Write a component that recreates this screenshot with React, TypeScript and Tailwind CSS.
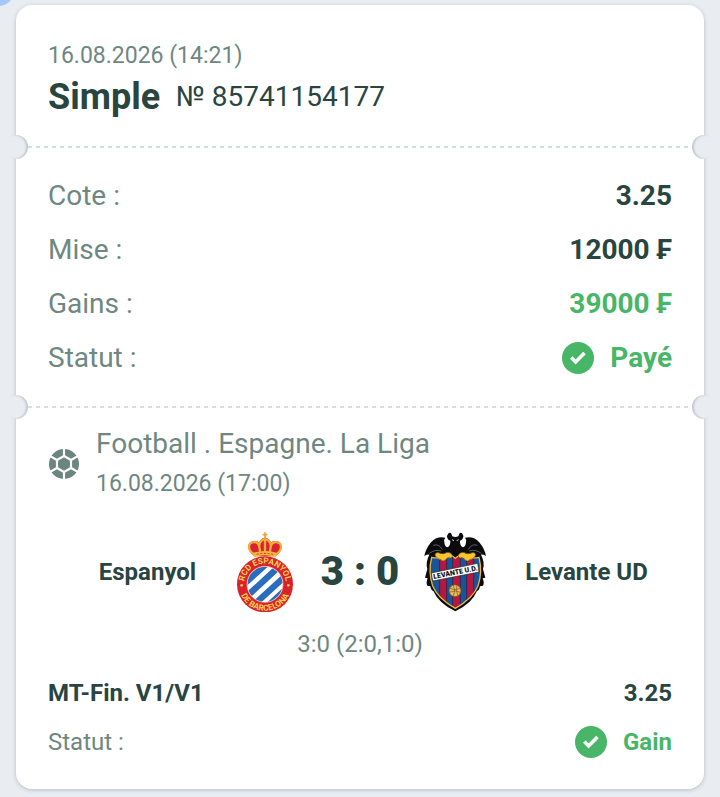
import React from 'react';
import clsx from 'clsx';

type Row = { label: string; value: string; win?: boolean };

const rows: Row[] = [
  { label: 'Cote :', value: '3.25' },
  { label: 'Mise :', value: '12000 ₣' },
  { label: 'Gains :', value: '39000 ₣', win: true },
];

const CheckBadge = () => (
  <svg viewBox="0 0 32 32" className="h-8 w-8 shrink-0" aria-hidden="true">
    <circle cx="16" cy="16" r="16" fill="#48b667" />
    <path d="M9.300 15.600l4.300 4.300 8.900-8.900" fill="none" stroke="#fff" strokeWidth="3.6" />
  </svg>
);

const BallIcon = () => (
  <svg viewBox="0 0 30 30" className="h-[30px] w-[30px] shrink-0" aria-hidden="true">
    <circle cx="15" cy="15" r="15" fill="#6b867f" />
    <g fill="none" stroke="#fff" strokeWidth="2.2">
      <path d="M15 7l7 4v8l-7 4-7-4v-8z" />
      <path d="M15-1v8M15 23v8M22 11l8-4.500M22 19l8 4.500M8 11L0 6.500M8 19l-8 4.500" />
    </g>
  </svg>
);

const EspanyolCrest = () => (
  <svg viewBox="27 30 192 240" className="h-20 w-16 shrink-0" role="img" aria-label="Espanyol">
    <defs>
      <clipPath id="esp-disc">
        <circle cx="123" cy="187" r="53" />
      </clipPath>
      <path id="esp-top" d="M61 199A63 63 0 1 1 185 199" />
      <path id="esp-bottom" d="M44 187a79 79 0 0 0 158 0" />
    </defs>
    <path d="M91 103C64 84 70 54 94 57q8 0 12 6 1-14 17-16 16 2 17 16 4-6 12-6c24-3 30 27 3 46z" fill="#d9232e" />
    <g fill="none" stroke="#f3ab3c" strokeWidth="7" strokeLinecap="round">
      <path d="M91 98C65 80 74 56 96 61q8 2 10 14l3 18" />
      <path d="M155 98c26-18 17-42-5-37q-8 2-10 14l-3 18" />
      <path d="M106 69q3-16 17-18 14 2 17 18M123 54v40" />
    </g>
    <path d="M123 31v20M116 38h14" stroke="#e8a52f" strokeWidth="5" />
    <path d="M86 93q37-12 74 0l-4 12q-33-10-66 0z" fill="#f3b83c" />
    <path d="M98 97q25-6 50 0" fill="none" stroke="#d9232e" strokeWidth="3" strokeDasharray="6 5" />
    <circle cx="123" cy="187" r="84" fill="#d9222c" />
    <circle cx="123" cy="187" r="54" fill="#fff" />
    <g clipPath="url(#esp-disc)" stroke="#2a6cbd" strokeWidth="19">
      <path d="M40 204L142 112M50 240L178 122M66 270L206 142M106 276L212 178" />
    </g>
    <circle cx="123" cy="187" r="54" fill="none" stroke="#f3c0a0" strokeWidth="2" />
    <g fill="#fbd052" className="font-['Roboto',sans-serif] text-[25px] font-bold">
      <text textAnchor="middle">
        <textPath href="#esp-top" startOffset="50%">RCD ESPANYOL</textPath>
      </text>
      <text textAnchor="middle">
        <textPath href="#esp-bottom" startOffset="50%">DE BARCELONA</textPath>
      </text>
    </g>
    <circle cx="53" cy="190" r="4" fill="#fbd052" />
    <circle cx="193" cy="190" r="4" fill="#fbd052" />
  </svg>
);

const SHIELD =
  'M53 106Q80 112 96 98Q112 97 124 109Q136 97 152 98Q168 112 195 106Q206 150 192 192Q176 230 124 259Q72 230 56 192Q42 150 53 106z';

const LevanteCrest = () => (
  <svg viewBox="27 30 192 240" className="h-20 w-16 shrink-0" role="img" aria-label="Levante UD">
    <defs>
      <clipPath id="lev-shield">
        <path d={SHIELD} />
      </clipPath>
    </defs>
    <path
      d="M104 33q6-2 8 2l3 8q9 4 18 0l3-8q2-4 8-2 6 8 3 15-2 7-9 8-1 15 9 20 8-2 9-15 2-9-3-14 26-6 44 15 15 18 19 40-8-5-15-4 12 22 6 43l7 26-8 2q6 14 1 22l-9 2q-2 12-9 14Q174 244 124 268Q74 244 58 207q-7-2-9-14l-9-2q-5-8 1-22l-8-2 7-26q-6-21 6-43-7-1-15 4 4-22 19-40 18-21 44-15-5 5-3 14 1 13 9 15 10-5 9-20-7-1-9-8-3-7 4-15z"
      fill="#0b0b0d"
    />
    <path d="M58 70q16-6 27 12M190 70q-16-6-27 12M46 94q18-13 36-7M202 94q-18-13-36-7" fill="none" stroke="#85898d" strokeWidth="2" />
    <path d="M114 53l6 3M134 53l-6 3" stroke="#c9cccf" strokeWidth="3" />
    <g clipPath="url(#lev-shield)">
      <path d="M40 90h168v180H40z" fill="#17549a" />
      <path d="M77 90h21v180H77zM116 90h23v180h-23zM158 90h21v180h-21z" fill="#b5173e" />
      <path d="M98 90v180M116 90v180M139 90v180M158 90v180M77 90v180M179 90v180" stroke="#202044" strokeWidth="2" />
    </g>
    <path d={SHIELD} fill="none" stroke="#e8b840" strokeWidth="4" />
    <path
      d="M64 101q-2-10 9-9 14 7 24 0 14-3 19 10l-6 6q-9-4-16 6-8 6-13-1-10-1-17-12zM184 101q2-10-9-9-14 7-24 0-14-3-19 10l6 6q9-4 16 6 8 6 13-1 10-1 17-12z"
      fill="#f7c52f"
      stroke="#8a6418"
      strokeWidth="2"
    />
    <path d="M52 153l139-29 4 26-139 27z" fill="#fff" stroke="#222" strokeWidth="2" />
    <text x="124" y="158" textAnchor="middle" transform="rotate(-11 124 150)" fill="#111" className="font-['Roboto',sans-serif] text-[21px] font-black">
      LEVANTE U.D.
    </text>
    <circle cx="123" cy="206" r="18" fill="#e9b955" stroke="#6d4924" strokeWidth="2" />
    <path d="M107 199q16 8 32 0M106 211q17-9 34 0M118 189q8 16 0 34M129 189q-5 16 3 33" fill="none" stroke="#805526" strokeWidth="2" />
  </svg>
);

// perforated line with a punched notch on each edge of the ticket
const Perforation = () => (
  <div className="-mx-3 -my-3 flex items-center" aria-hidden="true">
    <div className="h-6 w-6 shrink-0 rounded-full bg-[#e9edf2] shadow-[inset_-2px_0_2px_#c5c9ce]" />
    <div className="h-[2px] flex-1 bg-[repeating-linear-gradient(90deg,#d7dedf_0_4px,transparent_4px_8px)]" />
    <div className="h-6 w-6 shrink-0 rounded-full bg-[#e9edf2] shadow-[inset_2px_0_2px_#c5c9ce]" />
  </div>
);

const Status = ({ text, small }: { text: string; small?: boolean }) => (
  <span className={clsx('flex items-center gap-4 font-bold text-[#48b667]', small ? 'text-2xl' : 'text-[28px]')}>
    <CheckBadge />
    {text}
  </span>
);

export default function App() {
  return (
    <div className="relative min-h-screen overflow-hidden bg-[#e9edf2] px-4 pt-[5px] pb-2 font-['Roboto',sans-serif] text-[#29453f]">
      <div className="absolute -top-6 -left-4 h-[30px] w-[30px] rounded-full bg-[#a5c8fa]" />

      <main className="rounded-2xl bg-white shadow-[0_1px_4px_#b5bbc3]">
        <header className="px-8 pt-[33px] pb-[27px]">
          <time className="block text-[23px] leading-9 text-[#6f8781]">16.08.2026 (14:21)</time>
          <div className="flex items-center gap-4 leading-[46px]">
            <h1 className="text-4xl leading-[46px] font-bold">Simple</h1>
            <span className="text-[28px]">№ 85741154177</span>
          </div>
        </header>

        <Perforation />

        <dl className="px-8 pt-[22px] pb-[22px] text-[28px]">
          {rows.map(row => (
            <div key={row.label} className="flex h-[54px] items-center justify-between">
              <dt className="text-[#6f8781]">{row.label}</dt>
              <dd className={clsx('font-bold', row.win && 'text-[#48b667]')}>{row.value}</dd>
            </div>
          ))}
          <div className="flex h-[54px] items-center justify-between">
            <dt className="text-[#6f8781]">Statut :</dt>
            <dd><Status text="Payé" /></dd>
          </div>
        </dl>

        <Perforation />

        <section className="px-8 pt-[17px] pb-[29px]">
          <div className="flex items-center gap-4 text-[#6f8781]">
            <span className="flex w-8 justify-center"><BallIcon /></span>
            <div>
              <h2 className="text-[28px] leading-10">Football . Espagne. La Liga</h2>
              <time className="block text-[23px] leading-10">16.08.2026 (17:00)</time>
            </div>
          </div>

          <div className="mt-7 flex items-center text-2xl font-bold">
            <span className="flex-1 pl-3.5 text-center">Espanyol</span>
            <EspanyolCrest />
            <strong className="w-[126px] text-center text-[40px] leading-[48px]">3 : 0</strong>
            <LevanteCrest />
            <span className="flex-1 pl-3.5 text-center">Levante UD</span>
          </div>

          <p className="mt-3.5 text-center text-2xl leading-9 text-[#6f8781]">3:0 (2:0,1:0)</p>

          <div className="mt-[13px] flex items-center justify-between text-2xl leading-9 font-bold">
            <span>MT-Fin. V1/V1</span>
            <span>3.25</span>
          </div>
          <div className="mt-[13px] flex items-center justify-between text-2xl leading-9">
            <span className="text-[#6f8781]">Statut :</span>
            <Status text="Gain" small />
          </div>
        </section>
      </main>
    </div>
  );
}
